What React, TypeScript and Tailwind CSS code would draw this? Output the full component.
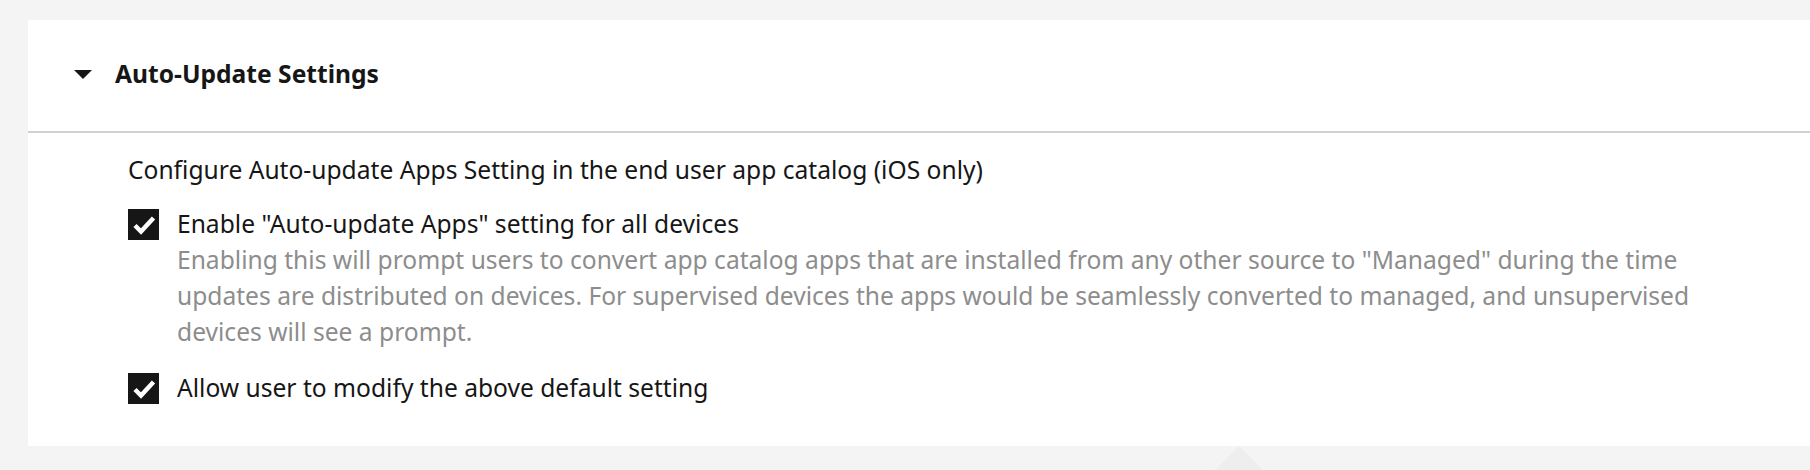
import React from "react";

const FONT = { fontFamily: '"Noto Sans", "Open Sans", sans-serif' };

function CaretDown() {
  return (
    <svg width="18" height="9" viewBox="0 0 18 9" aria-hidden="true" className="shrink-0">
      <polygon points="0,0 18,0 9,9" fill="#161616" />
    </svg>
  );
}

function CheckBox({ checked }: { checked: boolean }) {
  return (
    <span className="flex h-[31px] w-[31px] shrink-0 items-center justify-center bg-[#161616]">
      {checked && (
        <svg width="31" height="31" viewBox="0 0 31 31" aria-hidden="true">
          <polyline
            points="7,16.5 13,22.5 25.5,9"
            fill="none"
            stroke="#ffffff"
            strokeWidth="4.5"
            strokeLinejoin="miter"
          />
        </svg>
      )}
    </span>
  );
}

type Option = {
  label: string;
  help?: string;
};

const OPTIONS: Option[] = [
  {
    label: 'Enable "Auto-update Apps" setting for all devices',
    help: 'Enabling this will prompt users to convert app catalog apps that are installed from any other source to "Managed" during the time updates are distributed on devices. For supervised devices the apps would be seamlessly converted to managed, and unsupervised devices will see a prompt.',
  },
  {
    label: "Allow user to modify the above default setting",
  },
];

export default function App() {
  return (
    <div className="relative h-[470px] w-full overflow-hidden bg-[#f4f4f4] pl-[28px] pt-[20px]" style={FONT}>
      <section className="h-[426px] bg-white">
        <header className="flex h-[113px] items-center gap-[23px] border-b-2 border-[#d0d0d0] pb-[3px] pl-[46px]">
          <CaretDown />
          <h2 className="text-[24.6px] font-bold leading-none text-[#161616]">Auto-Update Settings</h2>
        </header>

        <div className="flex flex-col pl-[100px] pr-[70px] pt-[19px] text-[24.6px] leading-[36px] text-[#161616]">
          <p>Configure Auto-update Apps Setting in the end user app catalog (iOS only)</p>

          <div className="mt-[18px] flex flex-col gap-[20px]">
            {OPTIONS.map((opt) => (
              <label key={opt.label} className="flex items-start gap-[18px]">
                <span className="flex h-[36px] items-center">
                  <CheckBox checked />
                </span>
                <span className="flex flex-col">
                  <span>{opt.label}</span>
                  {opt.help && <span className="text-[#8d8d8d]">{opt.help}</span>}
                </span>
              </label>
            ))}
          </div>
        </div>
      </section>

      <div className="absolute left-[1213px] top-[446px] h-[26px] w-[52px] bg-[#eeeeee] [clip-path:polygon(50%_0,100%_100%,0_100%)]" />
    </div>
  );
}
